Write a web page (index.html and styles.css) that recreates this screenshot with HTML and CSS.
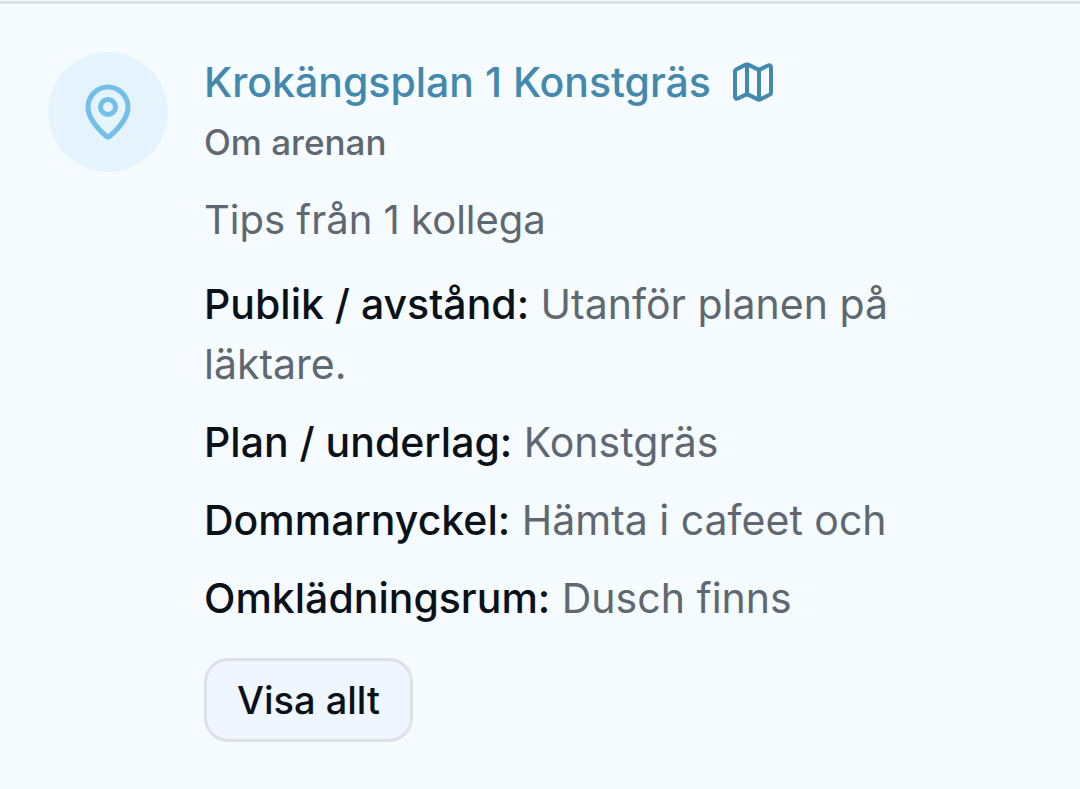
FILE: index.html
```html
<!DOCTYPE html>
<html lang="sv">
<head>
    <meta charset="UTF-8">
    <title>Krokängsplan 1 Konstgräs</title>
    <link rel="stylesheet" href="styles.css">
</head>
<body>
<section class="arena">
    <div class="pin">
        <svg viewBox="0 0 24 24" aria-hidden="true">
            <path d="M20 10c0 4.993-5.539 10.193-7.399 11.799a1 1 0 0 1-1.202 0C9.539 20.193 4 14.993 4 10a8 8 0 0 1 16 0"/>
            <circle cx="12" cy="10" r="3"/>
        </svg>
    </div>
    <div class="info">
        <h2 class="title">
            <a href="#">Krokängsplan 1 Konstgräs
                <svg viewBox="0 0 24 24" aria-hidden="true">
                    <path d="M14.106 5.553a2 2 0 0 0 1.788 0l3.659-1.83A1 1 0 0 1 21 4.619v12.764a1 1 0 0 1-.553.894l-4.553 2.277a2 2 0 0 1-1.788 0l-4.212-2.106a2 2 0 0 0-1.788 0l-3.659 1.83A1 1 0 0 1 3 19.381V6.618a1 1 0 0 1 .553-.894l4.553-2.277a2 2 0 0 1 1.788 0z"/>
                    <path d="M15 5.764v15M9 3.236v15"/>
                </svg>
            </a>
        </h2>
        <p class="about">Om arenan</p>
        <p class="tips">Tips från 1 kollega</p>
        <div class="facts">
            <p><strong>Publik / avstånd:</strong> Utanför planen på läktare.</p>
            <p><strong>Plan / underlag:</strong> Konstgräs</p>
            <p><strong>Dommarnyckel:</strong> Hämta i cafeet och</p>
            <p><strong>Omklädningsrum:</strong> Dusch finns</p>
        </div>
        <button type="button" class="more">Visa allt</button>
    </div>
</section>
</body>
</html>
```
FILE: styles.css
```css
*{
    margin: 0;
    padding: 0;
    box-sizing: border-box;
}
body{
    padding-top: 1px;
    background: #f6fbff;
    color: #5f6871;
    font-family: Inter, "Liberation Sans", sans-serif;
    font-size: 40px;
    line-height: 60px;
}
svg{
    fill: none;
    stroke: currentColor;
    stroke-width: 2;
    stroke-linecap: round;
    stroke-linejoin: round;
}
.arena{
    display: flex;
    gap: 36px;
    padding: 48px;
    border-top: 3px solid #dce2e8;
}
.pin{
    display: flex;
    flex: none;
    align-items: center;
    justify-content: center;
    width: 120px;
    height: 120px;
    border-radius: 50%;
    background: #e5f4fc;
    color: #74bfe9;
}
.pin svg{
    width: 60px;
    height: 60px;
}
.info{
    flex: 1;
    max-width: 720px;
}
.title{
    font-size: 41px;
    font-weight: 500;
}
.title a{
    display: flex;
    align-items: center;
    gap: 18px;
    color: #4389ad;
    text-decoration: none;
}
.title svg{
    width: 48px;
    height: 48px;
}
.about{
    font-size: 35px;
    font-weight: 500;
}
.tips{
    margin-top: 18px;
}
.facts{
    display: flex;
    flex-direction: column;
    gap: 18px;
    margin-top: 24px;
    font-size: 41px;
}
.facts strong{
    color: #0b1118;
    font-weight: 500;
}
.more{
    height: 84px;
    margin-top: 30px;
    padding: 0 30px;
    border: 3px solid #dce2e8;
    border-radius: 24px;
    background: #f0f6ff;
    color: #0b1118;
    font: 500 38px Inter, "Liberation Sans", sans-serif;
}
```
